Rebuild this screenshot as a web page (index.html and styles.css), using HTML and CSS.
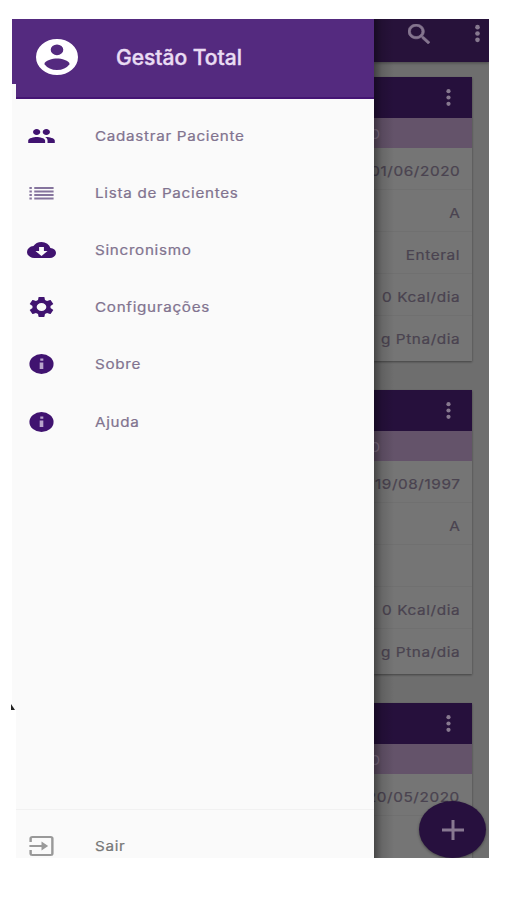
FILE: index.html
```html
<!DOCTYPE html>
<html lang="pt-BR">
<head>
<meta charset="utf-8">
<title>Gestão Total</title>
<link rel="stylesheet" href="styles.css">
</head>
<body>
<div class="app">
  <nav class="drawer">
    <header class="profile">
      <svg class="avatar" viewBox="2 2 20 20" preserveAspectRatio="none"><path d="M12 2a10 10 0 1 0 0 20 10 10 0 0 0 0-20zm0 3a3 3 0 1 1 0 6 3 3 0 0 1 0-6zm0 14.200a7.200 7.200 0 0 1-6-3.220c.03-1.990 4-3.080 6-3.080s5.970 1.090 6 3.080a7.200 7.200 0 0 1-6 3.220z"/></svg>
      <h1>Gestão Total</h1>
    </header>
    <ul class="menu">
      <li><svg viewBox="0 0 24 24" preserveAspectRatio="none"><path d="M16 11c1.660 0 2.990-1.340 2.990-3S17.660 5 16 5s-3 1.340-3 3 1.340 3 3 3zm-8 0c1.660 0 2.990-1.340 2.990-3S9.660 5 8 5 5 6.340 5 8s1.340 3 3 3zm0 2c-2.330 0-7 1.170-7 3.500V19h14v-2.500C15 14.170 10.330 13 8 13zm8 0c-.29 0-.62.02-.97.05 1.160.84 1.970 1.970 1.970 3.450V19h6v-2.500c0-2.330-4.670-3.500-7-3.500z"/></svg><span>Cadastrar Paciente</span></li>
      <li class="list"><svg viewBox="0 0 24 24" preserveAspectRatio="none"><path d="M2 6h2v2H2zM2 9.500h2v2H2zM2 13h2v2H2zM2 16.500h2v2H2zM6 6h16v2H6zM6 9.500h16v2H6zM6 13h16v2H6zM6 16.500h16v2H6z"/></svg><span>Lista de Pacientes</span></li>
      <li><svg viewBox="0 0 24 24" preserveAspectRatio="none"><path d="M19.350 10.040A7.490 7.490 0 0 0 12 4C9.110 4 6.600 5.640 5.350 8.040A5.990 5.990 0 0 0 0 14c0 3.310 2.690 6 6 6h13c2.760 0 5-2.240 5-5 0-2.640-2.050-4.780-4.650-4.960zM17 13l-5 5-5-5h3V9h4v4h3z"/></svg><span>Sincronismo</span></li>
      <li><svg viewBox="0 0 24 24" preserveAspectRatio="none"><path d="M19.430 12.980c.04-.32.07-.64.07-.98s-.03-.66-.07-.98l2.110-1.650c.19-.15.24-.42.12-.64l-2-3.460c-.12-.22-.39-.3-.61-.22l-2.490 1c-.52-.4-1.080-.73-1.690-.98l-.38-2.650C14.460 2.180 14.250 2 14 2h-4c-.25 0-.46.18-.49.42l-.38 2.650c-.61.25-1.170.59-1.690.98l-2.490-1c-.23-.09-.49 0-.61.22l-2 3.460c-.13.22-.07.49.12.64l2.110 1.650c-.04.32-.07.65-.07.98s.03.66.07.98l-2.110 1.650c-.19.15-.24.42-.12.64l2 3.460c.12.22.39.3.61.22l2.490-1c.52.4 1.080.73 1.690.98l.38 2.650c.03.24.24.42.49.42h4c.25 0 .46-.18.49-.42l.38-2.650c.61-.25 1.170-.59 1.690-.98l2.490 1c.23.09.49 0 .61-.22l2-3.460c.12-.22.07-.49-.12-.64l-2.110-1.650zM12 16a4 4 0 1 1 0-8 4 4 0 0 1 0 8z"/></svg><span>Configurações</span></li>
      <li><svg viewBox="0 0 24 24" preserveAspectRatio="none"><circle cx="12" cy="12" r="10"/><path class="cut" d="M11 6.500h2.500v2.300H11zM10.500 10.500h3V17h-3z"/></svg><span>Sobre</span></li>
      <li><svg viewBox="0 0 24 24" preserveAspectRatio="none"><circle cx="12" cy="12" r="10"/><path class="cut" d="M11 6.500h2.500v2.300H11zM10.500 10.500h3V17h-3z"/></svg><span>Ajuda</span></li>
    </ul>
    <footer class="exit">
      <svg viewBox="0 0 24 24" preserveAspectRatio="none"><path d="M3 8V4.500Q3 3 4.500 3h15Q21 3 21 4.500v15q0 1.500-1.500 1.500h-15Q3 21 3 19.500V16" fill="none" stroke="#999" stroke-width="2"/><path d="M2 11h10V7.500l5.500 4.500-5.500 4.500V13H2z" fill="#999"/></svg><span>Sair</span>
    </footer>
  </nav>
  <main class="content">
    <header class="bar">
      <svg class="search" viewBox="3 3 17.500 17.500" preserveAspectRatio="none"><path d="M15.500 14h-.79l-.28-.27A6.500 6.500 0 1 0 13.730 14.430l.27.28v.79l5 4.990L20.490 19zM9.500 14a4.500 4.500 0 1 1 0-9 4.500 4.500 0 0 1 0 9z"/></svg>
      <svg class="dots" viewBox="0 0 6 18"><circle cx="3" cy="3" r="2.200"/><circle cx="3" cy="9" r="2.200"/><circle cx="3" cy="15" r="2.200"/></svg>
    </header>
    <section class="cards">
      <article class="card">
        <div class="head"><svg class="dots" viewBox="0 0 6 18"><circle cx="3" cy="3" r="2"/><circle cx="3" cy="9" r="2"/><circle cx="3" cy="15" r="2"/></svg></div>
        <div class="band"><span>O</span></div>
        <p><span>01/06/2020</span></p><p><span>A</span></p><p><span>Enteral</span></p><p><span>0 Kcal/dia</span></p><p><span>g Ptna/dia</span></p>
      </article>
      <article class="card">
        <div class="head"><svg class="dots" viewBox="0 0 6 18"><circle cx="3" cy="3" r="2"/><circle cx="3" cy="9" r="2"/><circle cx="3" cy="15" r="2"/></svg></div>
        <div class="band"><span>O</span></div>
        <p><span>19/08/1997</span></p><p><span>A</span></p><p></p><p><span>0 Kcal/dia</span></p><p><span>g Ptna/dia</span></p>
      </article>
      <article class="card">
        <div class="head"><svg class="dots" viewBox="0 0 6 18"><circle cx="3" cy="3" r="2"/><circle cx="3" cy="9" r="2"/><circle cx="3" cy="15" r="2"/></svg></div>
        <div class="band"><span>O</span></div>
        <p><span>20/05/2020</span></p><p></p>
      </article>
    </section>
    <button class="add" aria-label="Adicionar"><svg viewBox="0 0 22 20"><path d="M11 0v20M0 10h22"/></svg></button>
  </main>
  <i class="edge-mark"></i>
</div>
</body>
</html>
```
FILE: styles.css
```css
* { box-sizing: border-box; }
body { margin: 0; background: #fff; font-family: Inter, "Liberation Sans", sans-serif; }
svg { display: block; flex: none; }
.app { position: relative; display: flex; width: 477px; height: 839px; margin: 19px 0 0 12px; }
.drawer { width: 362px; flex: none; display: flex; flex-direction: column; background: #fafafa; }
.profile {
  height: 80px; flex: none; display: flex; align-items: flex-start; padding: 20px 0 0 24px;
  background: #542a7f; border-bottom: 2px solid #451574;
  clip-path: polygon(0 0, 100% 0, 100% 100%, 4px 100%, 4px 65px, 0 65px);
}
.avatar { width: 42px; height: 36px; fill: #fff; }
h1 { margin: 5px 0 0 38px; font-size: 21px; line-height: 28px; font-weight: 500; color: #e9dcf3; white-space: nowrap; -webkit-text-stroke: .4px; }
.menu { list-style: none; margin: 0; padding: 8px 0 0; flex: 1; }
.menu li { height: 57.200px; display: flex; align-items: center; padding-left: 15px; }
.menu svg, .exit svg { width: 29px; height: 24px; fill: #401370; }
.menu .list svg { fill: #85749d; }
.menu .cut { fill: #b9a5cb; }
.menu span, .exit span {
  margin-left: 39px; font-size: 13px; line-height: 20px; letter-spacing: .6px;
  color: #81738f; -webkit-text-stroke: .2px; transform: scaleX(1.170); transform-origin: left; white-space: nowrap;
}
.exit { height: 49px; flex: none; border-top: 1px solid #f1f1f1; padding: 23px 0 0 15px; display: flex; align-items: center; }
.exit span { color: #777; }
.content { position: relative; flex: 1; min-width: 0; overflow: hidden; background: #6e6e6e; }
.content::after {
  content: ""; position: absolute; inset: 0 auto 0 0; width: 20px;
  background: linear-gradient(to right, rgba(0,0,0,.4), rgba(0,0,0,.12) 40%, transparent);
}
.bar { height: 43px; display: flex; justify-content: space-between; padding: 5px 8px 0 34px; background: #27123a; box-shadow: 0 1px 3px rgba(0,0,0,.35); }
.search { width: 22px; height: 20px; fill: #85758f; stroke: #85758f; stroke-width: .5; }
.dots { width: 7px; height: 19px; fill: #87798f; }
.cards { display: flex; flex-direction: column; gap: 29px; padding: 15px 17px 0 0; }
.card { height: 284px; background: #757575; box-shadow: 0 1px 2px rgba(0,0,0,.4); }
.head { height: 41px; display: flex; align-items: center; justify-content: flex-end; padding-right: 20px; background: #26103c; }
.band { height: 30px; background: #64536a; color: #8a788f; overflow: hidden; }
.band span { display: block; margin-left: -4px; font-size: 13px; line-height: 33px; }
.card p { height: 42px; margin: 0; display: flex; align-items: center; justify-content: flex-end; padding: 4px 12px 0 0; border-bottom: 1px solid #707070; }
.card p span { font-size: 13px; letter-spacing: .5px; color: #4a4350; -webkit-text-stroke: .2px; white-space: nowrap; transform: scaleX(1.180); transform-origin: right; }
.card p:last-child { border: 0; padding-top: 3px; }
.add {
  position: absolute; right: 3px; bottom: 0; width: 67px; height: 57px; border: 0; border-radius: 50%; padding: 0;
  display: flex; align-items: center; justify-content: center; background: #27103e; box-shadow: 0 1px 3px rgba(0,0,0,.4);
}
.add svg { width: 22px; height: 20px; fill: none; stroke: #887891; stroke-width: 3; }
.edge-mark { position: absolute; left: -1px; top: 685px; width: 4px; height: 6px; background: #222; clip-path: polygon(0 0, 100% 100%, 0 100%); }
.app::before { content: ""; position: absolute; left: 0; top: 691px; bottom: 0; width: 4px; background: #fff; }
```
